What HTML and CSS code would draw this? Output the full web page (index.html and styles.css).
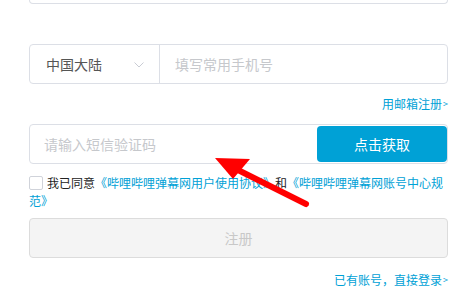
FILE: index.html
```html
<!DOCTYPE html>
<html lang="zh-CN">
<head>
    <meta charset="UTF-8">
    <meta name="viewport" content="width=device-width, initial-scale=1.0">
    <title>注册</title>
    <link rel="stylesheet" href="styles.css">
</head>

<body>
    <div class="container">
        <div class="prev-field"></div>

        <div class="phone-row">
            <div class="area-select">
                <span>中国大陆</span>
                <svg class="chevron" width="10" height="6" viewBox="0 0 10 6">
                    <path d="M0.5 0.5 L5 5 L9.5 0.5" fill="none" stroke="#c9ccd4" stroke-width="1"/>
                </svg>
            </div>
            <input type="text" class="phone-input" placeholder="填写常用手机号">
        </div>

        <div class="link-line"><a href="#">用邮箱注册<span class="gt">&gt;</span></a></div>

        <div class="sms-row">
            <input type="text" class="sms-input" placeholder="请输入短信验证码">
            <button type="button" class="sms-button">点击获取</button>
        </div>

        <div class="agreement">
            <span class="check"></span>我已同意<a href="#">《哔哩哔哩弹幕网用户使用协议》</a>和<a href="#">《哔哩哔哩弹幕网账号中心规范》</a>
        </div>

        <button type="button" class="register-button" disabled>注册</button>

        <div class="link-line login-line"><a href="#">已有账号，直接登录<span class="gt">&gt;</span></a></div>
    </div>

    <!-- annotation arrow -->
    <svg class="arrow" width="466" height="300" viewBox="0 0 466 300">
        <line x1="306" y1="204" x2="232" y2="167" stroke="#ff0000" stroke-width="6" stroke-linecap="round"/>
        <polygon points="215,158 250,159 233,179" fill="#ff0000"/>
    </svg>
</body>
</html>
```

FILE: styles.css
```css
body {
    font-family: "Noto Sans CJK SC", "Noto Sans", sans-serif;
    margin: 0;
    background-color: white;
    color: #222;
}

.container {
    width: 419px;
    margin-left: 29px;
}

.prev-field {
    height: 3px;
    border: 1px solid #dcdfe6;
    border-top: none;
    border-radius: 0 0 4px 4px;
}

.phone-row {
    margin-top: 40px;
    height: 40px;
    box-sizing: border-box;
    border: 1px solid #dcdfe6;
    border-radius: 4px;
    display: flex;
}

.area-select {
    width: 130px;
    box-sizing: border-box;
    border-right: 1px solid #dcdfe6;
    padding: 0 15px 0 16px;
    display: flex;
    align-items: center;
    justify-content: space-between;
    font-size: 14px;
    color: #555;
}

.chevron {
    margin-top: 1px;
}

.phone-input,
.sms-input {
    flex: 1;
    border: none;
    outline: none;
    font-family: inherit;
    font-size: 14px;
    background: transparent;
    min-width: 0;
}

.phone-input {
    padding: 0 15px;
}

.sms-input {
    padding: 0 14px;
}

.phone-input::placeholder,
.sms-input::placeholder {
    color: #c6c8cc;
}

.link-line {
    margin-top: 11px;
    height: 18px;
    display: flex;
    justify-content: flex-end;
    align-items: center;
    font-size: 12px;
}

.link-line a {
    display: flex;
    align-items: center;
    line-height: 18px;
    color: #00a1d6;
    text-decoration: none;
}

.gt {
    font-size: 9px;
    margin-left: 1px;
    line-height: 18px;
}

.sms-row {
    margin-top: 11px;
    height: 40px;
    box-sizing: border-box;
    border: 1px solid #dcdfe6;
    border-radius: 4px;
    padding: 1px 0;
    display: flex;
}

.sms-button {
    width: 130px;
    border: none;
    border-radius: 4px;
    background-color: #00a1d6;
    color: white;
    font-family: inherit;
    font-size: 14px;
    cursor: pointer;
}

.agreement {
    margin-top: 10px;
    font-size: 12px;
    line-height: 18px;
    color: #222;
}

.agreement a {
    color: #00a1d6;
    text-decoration: none;
}

.check {
    display: inline-block;
    width: 12px;
    height: 12px;
    border: 1px solid #d0d3da;
    border-radius: 2px;
    vertical-align: -2px;
    margin-right: 4px;
}

.register-button {
    display: block;
    width: 100%;
    height: 40px;
    margin-top: 8px;
    border: 1px solid #dcdcdc;
    border-radius: 4px;
    background-color: #f4f4f4;
    color: #c8c8c8;
    font-family: inherit;
    font-size: 14px;
}

.login-line {
    margin-top: 13px;
}

.arrow {
    position: absolute;
    left: 0;
    top: 0;
    pointer-events: none;
}
```
